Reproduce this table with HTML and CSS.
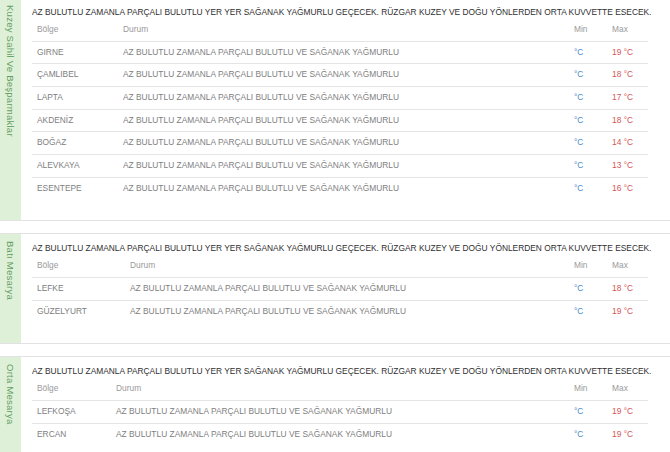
FILE: index.html
```html
<!DOCTYPE html>
<html>
<head>
    <meta charset="utf-8">
    <title>Hava Durumu</title>
    <link rel="stylesheet" href="styles.css">
</head>
<body>
    <div class="region region-first">
        <div class="region-label"><span>Kuzey Sahil Ve Beşparmaklar</span></div>
        <div class="region-body">
            <p class="forecast">AZ BULUTLU ZAMANLA PARÇALI BULUTLU YER YER SAĞANAK YAĞMURLU GEÇECEK. RÜZGAR KUZEY VE DOĞU YÖNLERDEN ORTA KUVVETTE ESECEK.</p>
            <table class="weather weather-kuzey">
                <colgroup>
                    <col class="col-place">
                    <col class="col-cond">
                    <col class="col-min">
                    <col class="col-max">
                </colgroup>
                <thead>
                    <tr><th>Bölge</th><th>Durum</th><th>Min</th><th>Max</th></tr>
                </thead>
                <tbody>
                    <tr><td>GIRNE</td><td>AZ BULUTLU ZAMANLA PARÇALI BULUTLU VE SAĞANAK YAĞMURLU</td><td class="min">°C</td><td class="max">19 °C</td></tr>
                    <tr><td>ÇAMLIBEL</td><td>AZ BULUTLU ZAMANLA PARÇALI BULUTLU VE SAĞANAK YAĞMURLU</td><td class="min">°C</td><td class="max">18 °C</td></tr>
                    <tr><td>LAPTA</td><td>AZ BULUTLU ZAMANLA PARÇALI BULUTLU VE SAĞANAK YAĞMURLU</td><td class="min">°C</td><td class="max">17 °C</td></tr>
                    <tr><td>AKDENİZ</td><td>AZ BULUTLU ZAMANLA PARÇALI BULUTLU VE SAĞANAK YAĞMURLU</td><td class="min">°C</td><td class="max">18 °C</td></tr>
                    <tr><td>BOĞAZ</td><td>AZ BULUTLU ZAMANLA PARÇALI BULUTLU VE SAĞANAK YAĞMURLU</td><td class="min">°C</td><td class="max">14 °C</td></tr>
                    <tr><td>ALEVKAYA</td><td>AZ BULUTLU ZAMANLA PARÇALI BULUTLU VE SAĞANAK YAĞMURLU</td><td class="min">°C</td><td class="max">13 °C</td></tr>
                    <tr><td>ESENTEPE</td><td>AZ BULUTLU ZAMANLA PARÇALI BULUTLU VE SAĞANAK YAĞMURLU</td><td class="min">°C</td><td class="max">16 °C</td></tr>
                </tbody>
            </table>
        </div>
    </div>

    <div class="region">
        <div class="region-label"><span>Batı Mesarya</span></div>
        <div class="region-body">
            <p class="forecast">AZ BULUTLU ZAMANLA PARÇALI BULUTLU YER YER SAĞANAK YAĞMURLU GEÇECEK. RÜZGAR KUZEY VE DOĞU YÖNLERDEN ORTA KUVVETTE ESECEK.</p>
            <table class="weather weather-bati">
                <colgroup>
                    <col class="col-place">
                    <col class="col-cond">
                    <col class="col-min">
                    <col class="col-max">
                </colgroup>
                <thead>
                    <tr><th>Bölge</th><th>Durum</th><th>Min</th><th>Max</th></tr>
                </thead>
                <tbody>
                    <tr><td>LEFKE</td><td>AZ BULUTLU ZAMANLA PARÇALI BULUTLU VE SAĞANAK YAĞMURLU</td><td class="min">°C</td><td class="max">18 °C</td></tr>
                    <tr><td>GÜZELYURT</td><td>AZ BULUTLU ZAMANLA PARÇALI BULUTLU VE SAĞANAK YAĞMURLU</td><td class="min">°C</td><td class="max">19 °C</td></tr>
                </tbody>
            </table>
        </div>
    </div>

    <div class="region">
        <div class="region-label"><span>Orta Mesarya</span></div>
        <div class="region-body">
            <p class="forecast">AZ BULUTLU ZAMANLA PARÇALI BULUTLU YER YER SAĞANAK YAĞMURLU GEÇECEK. RÜZGAR KUZEY VE DOĞU YÖNLERDEN ORTA KUVVETTE ESECEK.</p>
            <table class="weather weather-orta">
                <colgroup>
                    <col class="col-place">
                    <col class="col-cond">
                    <col class="col-min">
                    <col class="col-max">
                </colgroup>
                <thead>
                    <tr><th>Bölge</th><th>Durum</th><th>Min</th><th>Max</th></tr>
                </thead>
                <tbody>
                    <tr><td>LEFKOŞA</td><td>AZ BULUTLU ZAMANLA PARÇALI BULUTLU VE SAĞANAK YAĞMURLU</td><td class="min">°C</td><td class="max">19 °C</td></tr>
                    <tr><td>ERCAN</td><td>AZ BULUTLU ZAMANLA PARÇALI BULUTLU VE SAĞANAK YAĞMURLU</td><td class="min">°C</td><td class="max">19 °C</td></tr>
                </tbody>
            </table>
        </div>
    </div>
</body>
</html>
```

FILE: styles.css
```css
:root {
    --label-bg: #dff0d8;
    --label-text: #5f9e5f;
    --panel-line: #e2e2e2;
    --row-line: #e4e4e4;
    --min-blue: #4a8cca;
    --max-red: #d35656;
}

body {
    margin: 0;
    padding: 0;
    background: #fff;
    font-family: 'Liberation Sans', Arial, sans-serif;
    color: #333;
}

.region {
    display: flex;
    border-top: 1px solid var(--panel-line);
    border-bottom: 1px solid var(--panel-line);
    margin-bottom: 12px;
}

.region-first {
    margin-top: -3px;
}

.region-label {
    width: 21px;
    flex-shrink: 0;
    background: var(--label-bg);
    display: flex;
    justify-content: center;
    align-items: flex-start;
    padding-top: 7px;
    box-sizing: border-box;
}

.region-label span {
    writing-mode: vertical-rl;
    font-size: 9.6px;
    letter-spacing: 0.2px;
    line-height: 1;
    color: var(--label-text);
    white-space: nowrap;
}

.region-body {
    flex: 1;
    padding: 8px 0 21px 11px;
}

.forecast {
    margin: 0;
    font-size: 8.4px;
    line-height: 12px;
    color: #2f2f2f;
    white-space: nowrap;
}

.weather {
    width: 616px;
    table-layout: fixed;
    border-collapse: separate;
    border-spacing: 0;
    font-size: 8.4px;
}

.weather th,
.weather td {
    text-align: left;
    padding: 5px 5px;
    white-space: nowrap;
    overflow: hidden;
}

.weather th {
    font-weight: normal;
    color: #9a9a9a;
    line-height: 12.67px;
}

.weather td {
    color: #808080;
    line-height: 11.67px;
    border-top: 1px solid var(--row-line);
}

.weather td.min {
    color: var(--min-blue);
}

.weather td.max {
    color: var(--max-red);
}

.col-min { width: 38px; }
.col-max { width: 41px; }

.weather-kuzey .col-place { width: 86px; }
.weather-bati .col-place { width: 93px; }
.weather-orta .col-place { width: 79px; }
```
